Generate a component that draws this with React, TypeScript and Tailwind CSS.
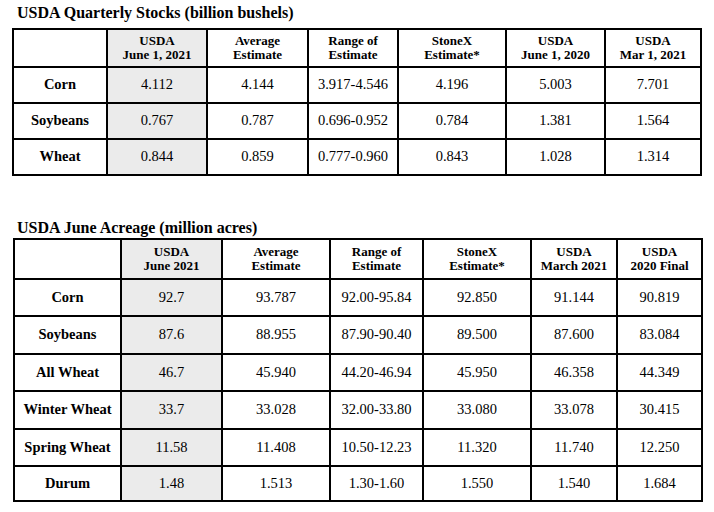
import React from "react";

type Table = {
  cols: string;
  rows: string;
  headers: string[][];
  data: string[][];
};

// Quarterly stocks, billion bushels
const stocks: Table = {
  cols: "grid-cols-[94px_100px_101px_90px_108px_99px_96px]",
  rows: "grid-rows-[38px_36px_36px_36px]",
  headers: [
    [],
    ["USDA", "June 1, 2021"],
    ["Average", "Estimate"],
    ["Range of", "Estimate"],
    ["StoneX", "Estimate*"],
    ["USDA", "June 1, 2020"],
    ["USDA", "Mar 1, 2021"],
  ],
  data: [
    ["Corn", "4.112", "4.144", "3.917-4.546", "4.196", "5.003", "7.701"],
    ["Soybeans", "0.767", "0.787", "0.696-0.952", "0.784", "1.381", "1.564"],
    ["Wheat", "0.844", "0.859", "0.777-0.960", "0.843", "1.028", "1.314"],
  ],
};

// June acreage, million acres
const acreage: Table = {
  cols: "grid-cols-[107px_101px_108px_93px_108px_86px_85px]",
  rows: "grid-rows-[40px_37px_38px_37px_38px_37px_35px]",
  headers: [
    [],
    ["USDA", "June 2021"],
    ["Average", "Estimate"],
    ["Range of", "Estimate"],
    ["StoneX", "Estimate*"],
    ["USDA", "March 2021"],
    ["USDA", "2020 Final"],
  ],
  data: [
    ["Corn", "92.7", "93.787", "92.00-95.84", "92.850", "91.144", "90.819"],
    ["Soybeans", "87.6", "88.955", "87.90-90.40", "89.500", "87.600", "83.084"],
    ["All Wheat", "46.7", "45.940", "44.20-46.94", "45.950", "46.358", "44.349"],
    ["Winter Wheat", "33.7", "33.028", "32.00-33.80", "33.080", "33.078", "30.415"],
    ["Spring Wheat", "11.58", "11.408", "10.50-12.23", "11.320", "11.740", "12.250"],
    ["Durum", "1.48", "1.513", "1.30-1.60", "1.550", "1.540", "1.684"],
  ],
};

const StockTable = ({ t, className }: { t: Table; className: string }) => (
  <div
    className={`grid w-max border-t-2 border-l-2 border-black ${t.cols} ${t.rows} ${className}`}
  >
    {t.headers.map((h, i) => (
      <div
        key={`h${i}`}
        className={`flex flex-col items-center justify-center border-r-2 border-b-2 border-black text-[13px] font-bold leading-[14px] ${
          i === 1 ? "bg-[#ebebeb]" : ""
        }`}
      >
        {h.map((line) => (
          <span key={line}>{line}</span>
        ))}
      </div>
    ))}
    {t.data.map((row, r) =>
      row.map((cell, c) => (
        <div
          key={`${r}-${c}`}
          className={`flex items-center justify-center border-r-2 border-b-2 border-black text-[14.5px] whitespace-nowrap ${
            c === 0 ? "font-bold" : ""
          } ${c === 1 ? "bg-[#ebebeb]" : ""}`}
        >
          {cell}
        </div>
      ))
    )}
  </div>
);

export default function App() {
  return (
    <div
      className="w-[714px] h-[512px] bg-white text-black overflow-hidden"
      style={{ fontFamily: '"Liberation Serif", "Times New Roman", serif' }}
    >
      <h2 className="pl-[17px] pt-[4px] h-[28px] text-[16px] font-bold leading-[18px]">
        USDA Quarterly Stocks (billion bushels)
      </h2>
      <StockTable t={stocks} className="ml-[12px]" />
      <h2 className="pl-[17px] pt-[43px] h-[62px] text-[16px] font-bold leading-[18px]">
        USDA June Acreage (million acres)
      </h2>
      <StockTable t={acreage} className="ml-[13px]" />
    </div>
  );
}
